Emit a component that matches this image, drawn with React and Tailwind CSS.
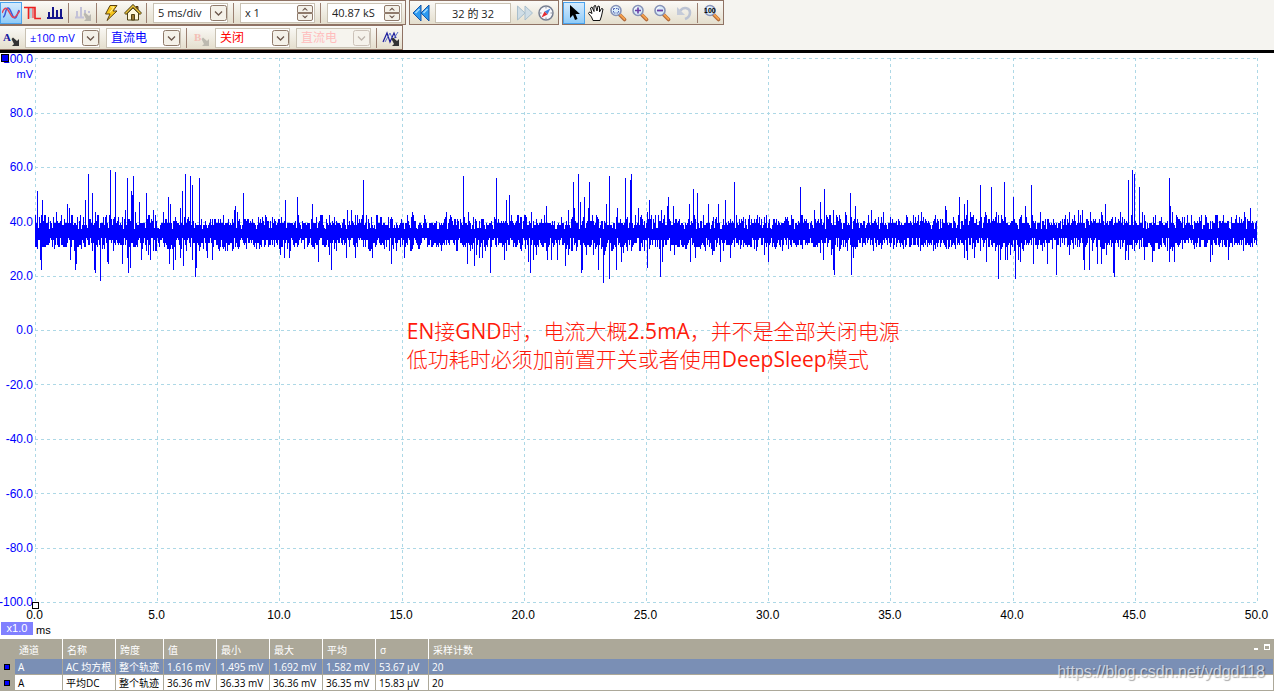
const PEAKS = [
  [2, 133], [7, 142], [21, 154], [32, 146], [34, 150], [50, 142], [53, 116], [57, 135], [60, 154], [75, 112],
  [80, 114], [90, 152], [92, 120], [96, 133], [97, 137], [98, 118], [100, 154], [104, 144], [111, 135], [118, 152],
  [128, 154], [133, 139], [135, 146], [145, 150], [147, 133], [150, 116], [155, 118], [157, 127], [164, 120],
  [199, 152], [200, 148], [202, 154], [208, 135], [250, 142], [262, 139], [277, 146], [312, 152], [316, 152],
  [328, 122], [377, 154], [411, 154], [428, 118], [433, 154], [461, 120], [471, 142], [474, 137], [496, 154],
  [511, 148], [533, 152], [538, 124], [539, 150], [543, 116], [545, 144], [549, 139], [553, 150], [554, 124],
  [571, 146], [574, 118], [582, 150], [590, 120], [595, 122], [596, 116], [603, 150], [612, 154], [614, 142],
  [626, 152], [632, 148], [633, 139], [638, 148], [654, 146], [658, 131], [662, 135], [673, 146], [683, 146],
  [690, 142], [699, 124], [765, 129], [779, 152], [785, 144], [789, 131], [798, 152], [810, 154], [815, 135],
  [820, 148], [836, 152], [848, 154], [886, 154], [910, 148], [911, 152], [924, 139], [929, 146], [932, 142],
  [935, 154], [945, 127], [950, 154], [956, 129], [961, 154], [969, 124], [978, 139], [990, 148], [996, 127],
  [1005, 154], [1034, 154], [1043, 152], [1047, 152], [1055, 154], [1066, 154], [1070, 146], [1085, 154],
  [1093, 122], [1097, 112], [1099, 116], [1104, 129], [1107, 154], [1134, 120], [1135, 148], [1137, 154],
  [1209, 154], [1215, 150],
];

const DIPS = [
  [5, 202], [6, 212], [35, 202], [40, 212], [41, 206], [59, 212], [60, 215], [65, 223], [72, 204], [73, 206],
  [87, 206], [92, 200], [93, 215], [95, 210], [106, 202], [113, 197], [115, 202], [134, 206], [138, 212],
  [140, 202], [145, 200], [148, 208], [157, 202], [160, 219], [161, 210], [172, 200], [177, 202], [245, 197],
  [249, 200], [254, 200], [283, 204], [294, 197], [296, 212], [311, 200], [320, 200], [337, 200], [356, 206],
  [369, 200], [432, 206], [439, 208], [441, 197], [444, 200], [447, 200], [455, 215], [469, 202], [471, 193],
  [493, 204], [495, 215], [498, 202], [501, 197], [512, 202], [516, 202], [522, 202], [530, 208], [533, 197],
  [546, 215], [547, 212], [551, 197], [558, 197], [563, 212], [568, 225], [569, 197], [574, 221], [581, 212],
  [586, 204], [588, 195], [612, 210], [625, 219], [627, 204], [639, 197], [655, 204], [660, 200], [677, 197],
  [685, 204], [695, 200], [729, 197], [733, 204], [785, 195], [788, 202], [796, 197], [798, 212], [799, 217],
  [816, 217], [818, 200], [929, 200], [932, 202], [939, 200], [951, 204], [963, 221], [965, 202], [970, 202],
  [972, 202], [975, 197], [980, 221], [983, 202], [985, 204], [998, 206], [1012, 206], [1021, 217], [1034, 197],
  [1048, 202], [1049, 212], [1054, 212], [1062, 206], [1066, 206], [1071, 197], [1078, 215], [1079, 219],
  [1090, 202], [1093, 202], [1109, 202], [1117, 204], [1134, 204], [1139, 204], [1175, 204], [1177, 197],
  [1193, 202],
];

// Sample levels of the noise floor, repeated by how often they occur
const HIGH = [171, 170, 167, 167, 167, 165, 165, 165, 165, 165, 163, 163, 161, 161, 159, 157];
const LOW = [180, 180, 182, 182, 182, 185, 185, 185, 187, 187, 187, 189, 189, 189, 191, 193];

function buildTrace() {
  const peaks = new Map(PEAKS);
  const dips = new Map(DIPS);
  let seed = 29;
  const next = () => {
    seed = (seed + 0x6d2b79f5) | 0;
    let t = Math.imul(seed ^ (seed >>> 15), 1 | seed);
    t = (t + Math.imul(t ^ (t >>> 7), 61 | t)) ^ t;
    return (t ^ (t >>> 14)) & 15;
  };
  let d = "";
  for (let x = 0; x < 1222; x++) {
    const top = HIGH[next()];
    const bottom = LOW[next()];
    d += `M${x + 0.5} ${peaks.get(x) ?? top}V${dips.get(x) ?? bottom}`;
  }
  return d;
}

const TRACE = buildTrace();

const Y_LABELS = ["100.0", "80.0", "60.0", "40.0", "20.0", "0.0", "-20.0", "-40.0", "-60.0", "-80.0", "-100.0"];
const X_LABELS = ["0.0", "5.0", "10.0", "15.0", "20.0", "25.0", "30.0", "35.0", "40.0", "45.0", "50.0"];

const HEADERS = ["通道", "名称", "跨度", "值", "最小", "最大", "平均", "σ", "采样计数"];
const ROWS = [
  ["A", "AC 均方根", "整个轨迹", "1.616 mV", "1.495 mV", "1.692 mV", "1.582 mV", "53.67 µV", "20"],
  ["A", "平均DC", "整个轨迹", "36.36 mV", "36.33 mV", "36.36 mV", "36.35 mV", "15.83 µV", "20"],
];

function Group({ children, label }) {
  return (
    <div
      role="toolbar"
      aria-label={label}
      className="flex items-center border border-[#8f7264] bg-gradient-to-b from-[#fbfaf7] to-[#e4decd] first:border-l-0"
    >
      {children}
    </div>
  );
}

function Separator() {
  return <div className="ml-0.5 mr-[3px] h-5 w-px shrink-0 bg-[#9b8072]" />;
}

function ToolButton({ label, active, disabled, children }) {
  return (
    <button
      type="button"
      aria-label={label}
      disabled={disabled}
      className={`flex h-[22px] w-[22px] shrink-0 items-center justify-center ${
        active ? "border border-[#4aa3ee] bg-gradient-to-b from-[#d5ebfd] to-[#8fcbf8]" : ""
      }`}
    >
      <svg width="18" height="18" viewBox="0 0 18 18" fill="none" className="shrink-0" aria-hidden="true">
        {children}
      </svg>
    </button>
  );
}

function Dropdown({ label, value, color = "text-[#222]", disabled }) {
  return (
    <div className="relative mx-[3px] w-[75px] shrink-0">
      <select
        aria-label={label}
        disabled={disabled}
        defaultValue={value}
        className={`block h-5 w-full appearance-none border border-[#c9c2b4] pl-1 pr-4 leading-4 disabled:opacity-100 ${
          disabled ? "bg-[#f6f4ee]" : "bg-white"
        } ${color}`}
      >
        <option>{value}</option>
      </select>
      <svg
        className={`pointer-events-none absolute right-px top-0.5 ${disabled ? "opacity-40" : ""}`}
        width="17"
        height="16"
        viewBox="0 0 17 16"
        fill="none"
      >
        <rect x="0.5" y="0.5" width="16" height="15" rx="2" fill="#f4f1e9" stroke="#8f7a6b" />
        <path d="M5 6.5l3.5 3.5L12 6.5" stroke="#6b574b" strokeWidth="1.3" />
      </svg>
    </div>
  );
}

function Spinner({ label, value }) {
  return (
    <div className="mx-[3px] flex h-5 w-[75px] shrink-0 items-center border border-[#c9c2b4] bg-white pr-px">
      <input aria-label={label} defaultValue={value} className="min-w-0 flex-1 pl-1 leading-4 text-[#222] outline-none" />
      <div className="flex flex-col">
        <button
          type="button"
          aria-label={`${label} +`}
          className="flex h-2 w-4 items-center justify-center rounded-t-xs border border-[#8f7a6b] bg-[#f4f1e9]"
        >
          <svg width="6" height="4" viewBox="0 0 6 4" fill="#6b574b">
            <path d="M0 3.5L3 .5l3 3H4.600L3 2.200 1.400 3.500z" />
          </svg>
        </button>
        <button
          type="button"
          aria-label={`${label} -`}
          className="flex h-2 w-4 items-center justify-center rounded-b-xs border border-[#8f7a6b] bg-[#f4f1e9]"
        >
          <svg width="6" height="4" viewBox="0 0 6 4" fill="#6b574b">
            <path d="M0 .5l3 3 3-3H4.600L3 1.800 1.400.5z" />
          </svg>
        </button>
      </div>
    </div>
  );
}

// Small pointer in the corner of the channel and maths buttons
function CornerArrow({ color = "#333" }) {
  return <path d="M9.500 10l1.500-1.500 4 3.500 2-2v7h-7l2-2z" fill={color} />;
}

function Magnifier({ children }) {
  return (
    <>
      <path d="M10.500 10.500l5 5" stroke="#b06a3c" strokeWidth="3.600" strokeLinecap="round" />
      <path d="M11 10.500l4.500 4.500" stroke="#f5a04c" strokeWidth="1.800" strokeLinecap="round" />
      <circle cx="7" cy="6.500" r="5" fill="#d9ecfa" stroke="#8793b8" strokeWidth="1.600" />
      <path d="M3.500 6a3.500 3.500 0 0 1 3-3" stroke="#fff" />
      {children}
    </>
  );
}

function Toolbars() {
  return (
    <header className="flex flex-col bg-[#f5f4f0] text-[11px]">
      <div className="flex h-[25px] gap-[3px]">
        <Group label="采集">
          <ToolButton label="示波器模式" active>
            <path d="M1 13C4 13 3 4 6 4s4 10 7 10c2 0 2-4 4-8" stroke="#3b59d8" strokeWidth="1.500" />
            <path d="M0 9c2-5 4-6 6-3s4 9 7 7 3-5 5-6" stroke="#e2455a" strokeWidth="1.500" />
          </ToolButton>
          <ToolButton label="余辉模式">
            <path d="M5 3h6v11H5z" fill="#b9d7dc" />
            <path d="M9 4v10" stroke="#ef8080" strokeWidth="2" />
            <path d="M0 3.500h11v11h6M4.500 3v12" stroke="#ec2020" strokeWidth="1.600" />
          </ToolButton>
          <ToolButton label="频谱模式">
            <path d="M1 14h16M3 14V8M7 14V3M11 14V6M15 14V5" stroke="#15158c" strokeWidth="2" />
          </ToolButton>
          <Separator />
          <ToolButton label="频谱选项" disabled>
            <path d="M1 13.500h9M3 13V7M7 13V3M11 9V6M15 9V7" stroke="#c3c2d8" strokeWidth="2" />
            <CornerArrow color="#b9b7b0" />
          </ToolButton>
          <Separator />
          <ToolButton label="自动设置">
            <path d="M8 1.500h7L11 7h4L5 16.500 8 10H3.500z" fill="#f6c51c" stroke="#5b4312" />
            <path d="M9 3h3L8 8.500" stroke="#fff3a6" />
          </ToolButton>
          <ToolButton label="主页">
            <path d="M12 2.500h2V7h-2z" fill="#b45b24" stroke="#4b3713" />
            <path d="M3.500 9L9 4l5.500 5v7h-11z" fill="#fff8db" stroke="#4f4317" />
            <path d="M1 10L9 2l8 8" stroke="#4f4317" strokeWidth="3" />
            <path d="M1.500 9.500L9 2l7.500 7.500" stroke="#edc43a" strokeWidth="1.300" />
            <path d="M7.500 10.500h3V16h-3z" fill="#9c7a33" stroke="#4f4317" />
          </ToolButton>
          <Separator />
          <Dropdown label="时基" value="5 ms/div" />
          <Separator />
          <Spinner label="缩放" value="x 1" />
          <Separator />
          <Spinner label="采样数" value="40.87 kS" />
        </Group>
        <Group label="缓冲区">
          <ToolButton label="上一个波形">
            <path d="M9 1v16L1 9zM17 1v16L9 9z" fill="#2d9af0" stroke="#1656a8" />
            <path d="M7.500 5L3.500 9M15.500 5l-4 4" stroke="#a5dcff" strokeWidth="1.500" />
          </ToolButton>
          <input
            aria-label="波形编号"
            defaultValue="32 的 32"
            className="mx-[3px] h-5 w-[76px] border border-[#c9c2b4] bg-white text-center leading-4 text-[#222] outline-none"
          />
          <ToolButton label="下一个波形" disabled>
            <path d="M1.500 2v14L9 9zM9 2v14l7.500-7z" fill="#cfdde6" stroke="#a9bfcd" />
          </ToolButton>
          <ToolButton label="波形导航">
            <circle cx="8" cy="9" r="7" fill="#f8f8fb" stroke="#777f91" strokeWidth="1.500" />
            <path d="M8 3v1.500M8 13.500V15M2 9h1.500M12.500 9H14" stroke="#8890a0" />
            <path d="M12.500 4.500L9.500 10.500l-3-3z" fill="#4c86dc" />
            <path d="M3.500 13.500l3-6 3 3z" fill="#e42c33" />
          </ToolButton>
        </Group>
        <Group label="查看">
          <ToolButton label="选择" active>
            <path d="M5 1v13l3-3 2 5 2.500-1-2-5H15z" fill="#000" />
          </ToolButton>
          <ToolButton label="手形">
            <path
              d="M6 16.500L4.500 13 1.500 9.500l1-1.500 2.500 1.500L3.500 4 5 3l2 4.500L7 2l1.500-.5L10 7l1-5 1.500.5L12.500 8l2-3.500 1.500.5-1.500 7-1.500 4.500z"
              fill="#fff"
              stroke="#111"
            />
          </ToolButton>
          <ToolButton label="窗口缩放">
            <Magnifier>
              <rect x="4.500" y="4.500" width="5" height="4.500" stroke="#5264b5" strokeDasharray="1.500 1" />
            </Magnifier>
          </ToolButton>
          <ToolButton label="放大">
            <Magnifier>
              <path d="M4 6.500h6M7 3.500v6" stroke="#6b3fa5" strokeWidth="1.600" />
            </Magnifier>
          </ToolButton>
          <ToolButton label="缩小">
            <Magnifier>
              <path d="M4 6.500h6" stroke="#6b3fa5" strokeWidth="1.800" />
            </Magnifier>
          </ToolButton>
          <ToolButton label="撤消缩放" disabled>
            <path d="M5 7c4-5 10-3 10 1.500 0 3-2 5.500-5 6.500" stroke="#bcc3d3" strokeWidth="2.600" />
            <path d="M2 3v8h8z" fill="#c5cbd9" />
          </ToolButton>
          <Separator />
          <ToolButton label="缩放 100%">
            <Magnifier>
              <text x="1" y="9" fontSize="7" fontWeight="700" fontFamily="Liberation Sans, sans-serif" fill="#000">
                100
              </text>
            </Magnifier>
          </ToolButton>
        </Group>
      </div>
      <div className="flex h-[25px]">
        <Group label="通道">
          <ToolButton label="通道 A 选项">
            <text x="1" y="12" fontSize="11" fontWeight="700" fontFamily="Liberation Serif, serif" fill="#1a1aa0">
              A
            </text>
            <CornerArrow />
          </ToolButton>
          <Dropdown label="通道 A 量程" value="±100 mV" color="text-[#0000ff]" />
          <Dropdown label="通道 A 耦合" value="直流电" color="text-[#0000ff] text-xs" />
          <Separator />
          <ToolButton label="通道 B 选项" disabled>
            <text x="2" y="12" fontSize="11" fontWeight="700" fontFamily="Liberation Serif, serif" fill="#f3bfb5">
              B
            </text>
            <CornerArrow color="#bdbab0" />
          </ToolButton>
          <Dropdown label="通道 B 量程" value="关闭" color="text-[#ff0000] text-xs" />
          <Dropdown label="通道 B 耦合" value="直流电" color="text-[#ffbcbc] text-xs" disabled />
          <Separator />
          <ToolButton label="数学通道">
            <path d="M1 13l4-9 3 9 4-9 2 5" stroke="#1c1c9c" strokeWidth="1.200" />
            <path d="M3 13l5-9 3 7 5-8" stroke="#5e70c8" />
            <CornerArrow />
          </ToolButton>
        </Group>
      </div>
    </header>
  );
}

function Grid() {
  const lines = [0, 1, 2, 3, 4, 5, 6, 7, 8, 9, 10];
  return (
    <svg
      viewBox="0 0 1223 546"
      preserveAspectRatio="none"
      shapeRendering="crispEdges"
      className="absolute inset-0 h-full w-full"
      role="img"
      aria-label="通道 A 波形"
    >
      <g stroke="#add8e6" strokeDasharray="3 3">
        {lines.map((i) => (
          <path
            key={i}
            vectorEffect="non-scaling-stroke"
            d={`M0 ${Math.round(i * 54.5) + 0.5}H1223M${Math.round(i * 122.2) + 0.5} 0V546`}
          />
        ))}
      </g>
      <path d={TRACE} stroke="#0000ff" vectorEffect="non-scaling-stroke" />
    </svg>
  );
}

function Plot() {
  return (
    <main className="grid min-h-0 flex-1 grid-cols-[35px_1fr_16px] grid-rows-[1fr_36px] border-t-[3px] border-black bg-white pt-[5px] font-['Liberation_Sans',sans-serif] text-xs">
      <div className="relative flex flex-col justify-between pr-0.5 text-[#0000ff]">
        {Y_LABELS.map((label) => (
          <div key={label} className="flex h-px items-center justify-end">
            {label}
          </div>
        ))}
        <span className="absolute right-0.5 top-2 text-[11px] leading-4">mV</span>
        <span className="absolute -top-1 left-px size-2 border border-black bg-[#0000ff]" />
      </div>
      <div className="relative">
        <Grid />
        <span className="absolute -bottom-1.5 -left-[3px] size-[7px] border border-black bg-white" />
        <p className="absolute left-[30.400%] top-[47.600%] whitespace-nowrap font-['Open_Sans','Noto_Sans_CJK_SC',sans-serif] text-[21px] font-light leading-7 text-[#ff1a0a]">
          <span className="font-normal">EN</span>接<span className="font-normal">GND</span>时，电流大概
          <span className="font-normal">2.5mA</span>，并不是全部关闭电源
          <br />
          低功耗时必须加前置开关或者使用<span className="font-normal">DeepSleep</span>模式
        </p>
      </div>
      <div />
      <div className="flex items-end pb-1 pl-px">
        <span className="h-[13px] w-8 bg-[#8080ff] text-center text-[11px] leading-[13px] text-white">x1.0</span>
      </div>
      <div>
        <div className="-ml-px mr-px flex justify-between pt-1 leading-4 text-black">
          {X_LABELS.map((label) => (
            <div key={label} className="flex w-px justify-center">
              {label}
            </div>
          ))}
        </div>
        <div className="pl-px text-[11px] leading-[14px]">ms</div>
      </div>
    </main>
  );
}

function Measurements() {
  return (
    <footer className="relative bg-[#aca899]">
      <table className="w-full table-fixed border-separate border-spacing-0 text-[10px] leading-[14px]">
        <colgroup>
          <col className="w-[15px]" />
          <col className="w-12" />
          <col className="w-[53px]" />
          <col className="w-12" />
          <col className="w-[53px]" />
          <col className="w-[53px]" />
          <col className="w-[53px]" />
          <col className="w-[53px]" />
          <col className="w-[53px]" />
          <col />
        </colgroup>
        <thead>
          <tr className="h-5 text-left text-white">
            <th aria-label="颜色" />
            {HEADERS.map((name) => (
              <th key={name} className="border-r border-white p-0 pl-1 pt-px font-normal last:border-r-0">
                {name}
              </th>
            ))}
          </tr>
        </thead>
        <tbody>
          {ROWS.map((row, i) => (
            <tr key={row[1]} className={`h-4 ${i === 0 ? "text-white" : "text-black"}`}>
              <td className="p-0 pl-1">
                <div className="size-1.5 border border-black bg-[#0000ff]" />
              </td>
              {row.map((cell, j) => (
                <td
                  key={j}
                  className={`whitespace-nowrap border-b border-r border-[#aca899] p-0 pl-[3px] pt-px ${
                    i === 0 ? "bg-[#7a8fb5]" : "bg-white"
                  }`}
                >
                  {cell}
                </td>
              ))}
            </tr>
          ))}
        </tbody>
      </table>
      <div className="absolute right-1 top-[5px] flex items-end gap-1.5">
        <button type="button" aria-label="最小化" className="h-1.5 w-1 border-b-2 border-white" />
        <button type="button" aria-label="最大化" className="h-1.5 w-1.5 border border-t-2 border-white" />
      </div>
      <a
        href="https://blog.csdn.net/ydgd118"
        className="absolute bottom-[7px] right-[9px] font-['Liberation_Sans',sans-serif] text-base leading-6 text-white/65 [text-shadow:1px_1px_1px_rgb(0_0_0/0.35)]"
      >
        https://blog.csdn.net/ydgd118
      </a>
    </footer>
  );
}

export default function App() {
  return (
    <div className="flex h-screen flex-col overflow-hidden font-['Open_Sans','Noto_Sans_CJK_SC',sans-serif]">
      <Toolbars />
      <Plot />
      <Measurements />
    </div>
  );
}
